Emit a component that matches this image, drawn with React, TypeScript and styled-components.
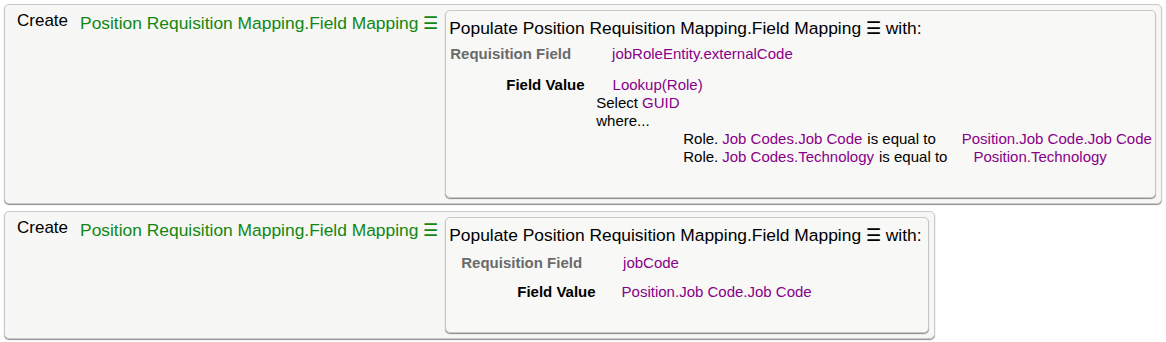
import React from "react";
import styled, { createGlobalStyle } from "styled-components";

const GlobalStyle = createGlobalStyle`
    body {
        margin: 0;
        padding: 4px 4px;
        background: #ffffff;
        font-family: "Liberation Sans", Arial, sans-serif;
        color: #000;
    }
`;

const ActionCard = styled.div`
    display: flex;
    flex-direction: row;
    align-items: flex-start;
    width: fit-content;
    box-sizing: border-box;
    background-color: #f7f7f6;
    border: 1px solid #c8c8c8;
    border-radius: 5px;
    box-shadow: 0 1px 1px rgba(0, 0, 0, 0.45);
    padding: 5px 5px 5px 12px;
    margin-bottom: 7px;
`;

const Verb = styled.span`
    font-size: 17px;
    line-height: 20px;
    margin-top: 1px;
    margin-right: 12px;
`;

const Entity = styled.span`
    font-size: 17.4px;
    line-height: 20px;
    margin-top: 3px;
    margin-right: 7px;
    color: #128712;
    white-space: nowrap;
`;

const PopulateCard = styled.div`
    box-sizing: border-box;
    background-color: #f8f8f7;
    border: 1px solid #c8c8c8;
    border-radius: 5px;
    box-shadow: 0 1px 1px rgba(0, 0, 0, 0.45);
    padding: 6px 3px 31px 3px;
`;

const Title = styled.div`
    font-size: 17.4px;
    line-height: 22px;
    white-space: nowrap;
    margin-right: 4px;
    margin-bottom: 3px;
`;

interface RowProps {
    indent: number;
    gap: number;
    top?: number;
}

const Row = styled.div<RowProps>`
    display: flex;
    flex-direction: row;
    align-items: baseline;
    font-size: 15px;
    line-height: 18px;
    padding-left: ${(p) => p.indent}px;
    margin-top: ${(p) => p.top ?? 0}px;

    & > :first-child {
        margin-right: ${(p) => p.gap}px;
    }
`;

const Label = styled.span<{ muted?: boolean }>`
    font-weight: bold;
    white-space: nowrap;
    color: ${(p) => (p.muted ? "#6a6a6a" : "#000")};
`;

const Ref = styled.span`
    color: #880088;
    white-space: nowrap;
`;

const Lookup = styled.div`
    display: flex;
    flex-direction: column;
    font-size: 15px;
    line-height: 18px;
`;

const LookupLine = styled.div<{ indent: number }>`
    padding-left: ${(p) => p.indent}px;
    white-space: nowrap;
`;

const Condition = styled.div`
    display: flex;
    flex-direction: row;
    padding-left: 234px;
    white-space: nowrap;
`;

const Cell = styled.span<{ after?: number; purple?: boolean }>`
    margin-right: ${(p) => p.after ?? 0}px;
    color: ${(p) => (p.purple ? "#880088" : "#000")};
`;

interface Cond {
    field: string;
    value: string;
}

const conditions: Cond[] = [
    { field: "Job Codes.Job Code", value: "Position.Job Code.Job Code" },
    { field: "Job Codes.Technology", value: "Position.Technology" },
];

const App = () => {
    return (
        <>
            <GlobalStyle />
            <ActionCard>
                <Verb>Create</Verb>
                <Entity>Position Requisition Mapping.Field Mapping ☰</Entity>
                <PopulateCard>
                    <Title>Populate Position Requisition Mapping.Field Mapping ☰ with:</Title>
                    <Row indent={1} gap={41} top={6}>
                        <Label muted>Requisition Field</Label>
                        <Ref>jobRoleEntity.externalCode</Ref>
                    </Row>
                    <Row indent={57} gap={28} top={13}>
                        <Label>Field Value</Label>
                        <Ref>Lookup(Role)</Ref>
                    </Row>
                    <Lookup>
                        <LookupLine indent={147}>
                            Select <Ref>GUID</Ref>
                        </LookupLine>
                        <LookupLine indent={147}>where...</LookupLine>
                        {conditions.map((c) => (
                            <Condition key={c.field}>
                                <Cell after={4}>Role.</Cell>
                                <Cell after={5} purple>
                                    {c.field}
                                </Cell>
                                <Cell after={26}>is equal to</Cell>
                                <Cell purple>{c.value}</Cell>
                            </Condition>
                        ))}
                    </Lookup>
                </PopulateCard>
            </ActionCard>
            <ActionCard>
                <Verb>Create</Verb>
                <Entity>Position Requisition Mapping.Field Mapping ☰</Entity>
                <PopulateCard>
                    <Title>Populate Position Requisition Mapping.Field Mapping ☰ with:</Title>
                    <Row indent={12} gap={41} top={8}>
                        <Label muted>Requisition Field</Label>
                        <Ref>jobCode</Ref>
                    </Row>
                    <Row indent={68} gap={26} top={11}>
                        <Label>Field Value</Label>
                        <Ref>Position.Job Code.Job Code</Ref>
                    </Row>
                </PopulateCard>
            </ActionCard>
        </>
    );
};

export default App;
